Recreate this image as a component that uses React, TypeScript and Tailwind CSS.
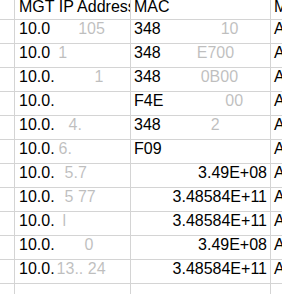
import React from "react";

type Row = { ip: string; ipTail?: string; ipGap?: string; mac: string; macTail?: string; macGap?: string; num?: boolean };

const rows: Row[] = [
  { ip: "10.0", ipTail: "105", ipGap: "ml-[28px]", mac: "348", macTail: "10", macGap: "ml-[60px]" },
  { ip: "10.0", ipTail: "1", ipGap: "ml-[8px]", mac: "348", macTail: "E700", macGap: "ml-[36px]" },
  { ip: "10.0.", ipTail: "1", ipGap: "ml-[40px]", mac: "348", macTail: "0B00", macGap: "ml-[40px]" },
  { ip: "10.0.", mac: "F4E", macTail: "00", macGap: "ml-[62px]" },
  { ip: "10.0.", ipTail: "4.", ipGap: "ml-[14px]", mac: "348", macTail: "2", macGap: "ml-[50px]" },
  { ip: "10.0.", ipTail: "6.", ipGap: "ml-[4px]", mac: "F09" },
  { ip: "10.0.", ipTail: "5.7", ipGap: "ml-[10px]", mac: "3.49E+08", num: true },
  { ip: "10.0.", ipTail: "5 77", ipGap: "ml-[10px]", mac: "3.48584E+11", num: true },
  { ip: "10.0.", ipTail: "l", ipGap: "ml-[8px]", mac: "3.48584E+11", num: true },
  { ip: "10.0.", ipTail: "0", ipGap: "ml-[30px]", mac: "3.49E+08", num: true },
  { ip: "10.0.", ipTail: "13.. 24", ipGap: "ml-[2px]", mac: "3.48584E+11", num: true },
];

const cell = "border-r border-b border-[#d4d4d4] overflow-hidden whitespace-nowrap flex items-end";

const App: React.FC = () => (
  <div className="w-[282px] h-[294px] overflow-hidden bg-white text-black text-[16px] leading-none" style={{ fontFamily: '"Liberation Sans", Arial, sans-serif' }}>
    <div className="grid grid-cols-[15px_116px_140px_1fr]">
      <div className={`${cell} h-[20px]`} />
      <div className={`${cell} h-[20px] pl-[4px] pb-[4px]`}>MGT IP Address</div>
      <div className={`${cell} h-[20px] pl-[3px] pb-[4px]`}>MAC</div>
      <div className={`${cell} h-[20px] pl-[3px] pb-[4px] border-r-0`}>M</div>
      {rows.map((r, i) => (
        <React.Fragment key={i}>
          <div className={`${cell} h-[24px]`} />
          <div className={`${cell} h-[24px] pl-[4px] pb-[6px]`}>
            <span>{r.ip}</span>
            {r.ipTail && <span className={`${r.ipGap} opacity-25`}>{r.ipTail}</span>}
          </div>
          <div className={`${cell} h-[24px] pb-[6px] ${r.num ? "justify-end pr-[3px]" : "pl-[3px]"}`}>
            <span>{r.mac}</span>
            {r.macTail && <span className={`${r.macGap} opacity-25`}>{r.macTail}</span>}
          </div>
          <div className={`${cell} h-[24px] pl-[3px] pb-[6px] border-r-0`}>A</div>
        </React.Fragment>
      ))}
      <div className={`${cell} h-[24px]`} />
      <div className={`${cell} h-[24px]`} />
      <div className={`${cell} h-[24px]`} />
      <div className={`${cell} h-[24px] border-r-0`} />
    </div>
  </div>
);

export default App;
